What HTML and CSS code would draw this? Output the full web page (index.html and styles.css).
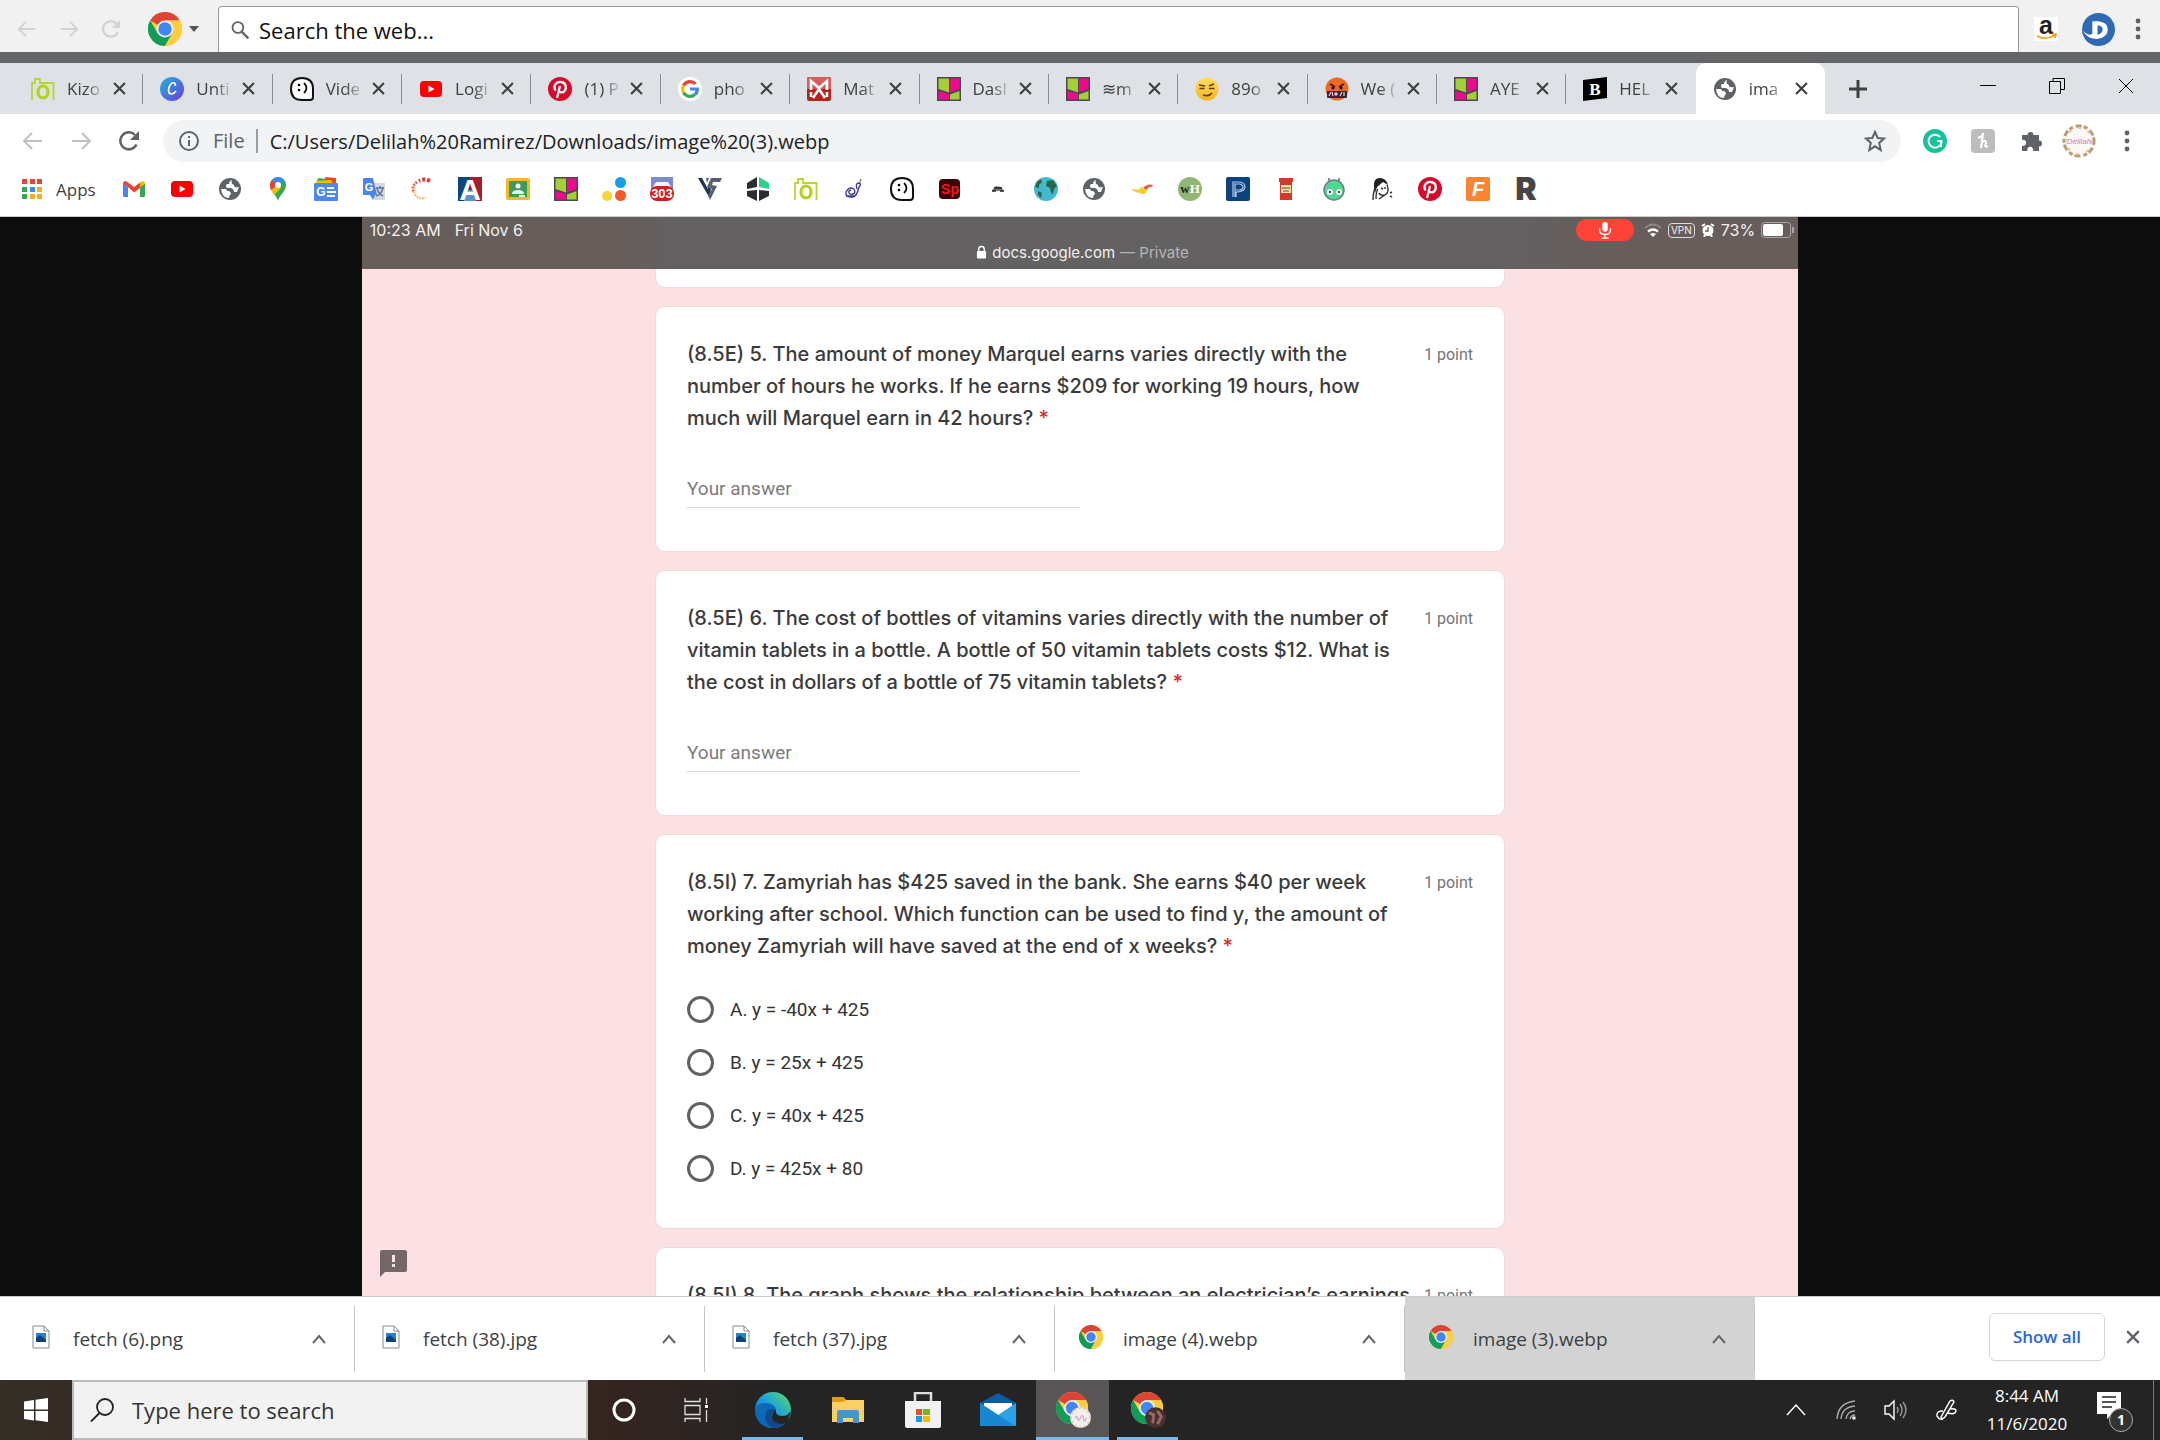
FILE: index.html
```html
<!DOCTYPE html>
<html lang="en">
<head>
	<title>image (3).webp</title>
	<meta charset="utf-8">
	<link rel="stylesheet" href="styles.css">
</head>
<body>
	<!-- shared icons -->
	<svg class="sprite" aria-hidden="true">
		<defs>
			<linearGradient id="g-canva" x1="0" y1="0" x2="1" y2="1"><stop offset="0" stop-color="#21b5d8"/><stop offset="1" stop-color="#6a3be0"/></linearGradient>
			<linearGradient id="g-edge" x1="0" y1="1" x2="1" y2="0"><stop offset="0" stop-color="#0c59a4"/><stop offset=".5" stop-color="#1b9de2"/><stop offset="1" stop-color="#5be05a"/></linearGradient>
			<linearGradient id="g-emoji" x1="0" y1="0" x2="0" y2="1"><stop offset="0" stop-color="#ffdf5e"/><stop offset="1" stop-color="#f5b31f"/></linearGradient>
		</defs>
		<symbol id="back" viewBox="0 0 24 24"><path d="M21 12H4M11 4l-8 8 8 8" fill="none" stroke="currentColor" stroke-width="2"/></symbol>
		<symbol id="forward" viewBox="0 0 24 24"><path d="M3 12h17M13 4l8 8-8 8" fill="none" stroke="currentColor" stroke-width="2"/></symbol>
		<symbol id="reload" viewBox="0 0 24 24"><path d="M19.500 15.500A8.500 8.500 0 1 1 18 6" fill="none" stroke="currentColor" stroke-width="2.500"/><path d="M22 2v9h-9z" fill="currentColor"/></symbol>
		<symbol id="chrome" viewBox="0 0 24 24">
			<circle cx="12" cy="12" r="12" fill="#ffcd40"/>
			<path d="M12 12L1.600 6A12 12 0 0 1 22.400 6H12z" fill="#db4437"/>
			<path d="M1.600 6A12 12 0 0 0 12 24l5.200-9L12 12 6.800 15z" fill="#0f9d58"/>
			<path d="M12 6h10.400A12 12 0 0 1 12 24l5.200-9z" fill="#ffcd40"/>
			<circle cx="12" cy="12" r="6" fill="#f1f1f1"/><circle cx="12" cy="12" r="4.700" fill="#4285f4"/>
		</symbol>
		<symbol id="lens" viewBox="0 0 24 24"><circle cx="9.500" cy="9" r="6.500" fill="none" stroke="currentColor" stroke-width="2.200"/><path d="M14 14l8 8" stroke="currentColor" stroke-width="2.800"/></symbol>
		<symbol id="dots" viewBox="0 0 24 24"><circle cx="12" cy="4" r="2.400" fill="#5f6368"/><circle cx="12" cy="12" r="2.400" fill="#5f6368"/><circle cx="12" cy="20" r="2.400" fill="#5f6368"/></symbol>
		<symbol id="x" viewBox="0 0 12 12"><path d="M1 1l10 10M11 1L1 11" fill="none" stroke="currentColor" stroke-width="2"/></symbol>
		<symbol id="up" viewBox="0 0 14 10"><path d="M1 9l6-7 6 7" fill="none" stroke="currentColor" stroke-width="2"/></symbol>
		<symbol id="camera" viewBox="0 0 24 24"><path d="M1 23V6h3V2h5v4h13.500v17" fill="none" stroke="#b9d532" stroke-width="1.800"/><ellipse cx="12" cy="15" rx="5" ry="6" fill="none" stroke="#b4d21c" stroke-width="3.200"/></symbol>
		<symbol id="canva" viewBox="0 0 24 24"><circle cx="12" cy="12" r="12" fill="url(#g-canva)"/><path d="M15.500 9c0-4-3-4-5-1.500-2.500 3-3 9 .5 9.500 2 .2 4-1.500 5-3" fill="none" stroke="#fff" stroke-width="1.600"/></symbol>
		<symbol id="smile" viewBox="0 0 24 24"><path d="M12 1C5 1 1 5 1 12s4 11 11 11h8q3 0 3-3v-8C23 5 19 1 12 1z" fill="#fff" stroke="#111" stroke-width="2"/><circle cx="9" cy="8" r="1.300"/><circle cx="9" cy="13" r="1.300"/><path d="M14 6q5 5 0 10" fill="none" stroke="#111" stroke-width="1.800"/></symbol>
		<symbol id="youtube" viewBox="0 0 24 24"><rect x="1" y="4" width="22" height="16" rx="4" fill="#f00"/><path d="M9.500 8.500v7l6-3.500z" fill="#fff"/></symbol>
		<symbol id="pinterest" viewBox="0 0 24 24"><circle cx="12" cy="12" r="12" fill="#d8092a"/><path d="M9 21l3-12M7.500 13.500C4.500 8 9 4.500 13 5c5 .5 6 6 3.500 9-1.500 2-4.500 1.800-5.500 0" fill="none" stroke="#fff" stroke-width="2.300"/></symbol>
		<symbol id="google" viewBox="0 0 24 24"><circle cx="12" cy="12" r="12" fill="#fff"/><g fill="none" stroke-width="3.200"><path d="M17.500 7A7.500 7.500 0 0 0 5.500 8.500" stroke="#ea4335"/><path d="M5.500 8.500a7.500 7.500 0 0 0 0 7" stroke="#fbbc05"/><path d="M5.500 15.500a7.500 7.500 0 0 0 11.500 2" stroke="#34a853"/><path d="M17 17.500q2.500-2 2.300-5.500H12" stroke="#4285f4"/></g></symbol>
		<symbol id="mathway" viewBox="0 0 24 24"><rect width="24" height="24" rx="2" fill="#b81f1f"/><path d="M0 2q0-2 2-2h20q2 0 2 2v10H0z" fill="#d3605c"/><path d="M4 13V4l8 7 8-7v9M6 21l6-9 6 9M4 20v-5M20 20v-5" fill="none" stroke="#fff" stroke-width="2.600"/></symbol>
		<symbol id="kami" viewBox="0 0 24 24"><rect width="24" height="24" fill="#4d4650"/><path d="M1.500 1.500H12v14L1.500 12z" fill="#a4d037"/><path d="M13 1.500h9.500V12L13 15.500zM1.500 14l10.500 3v5.500H1.500z" fill="#ed0a8c"/><path d="M13 17.500l9.500-3.500v8.500H13z" fill="#a4d037"/></symbol>
		<symbol id="smirk" viewBox="0 0 24 24"><circle cx="12" cy="12" r="11.500" fill="url(#g-emoji)"/><path d="M4 8l6 1M14 9l5-2M4.500 11.500h5M14 11.500h5.500M8 18q6 2 9-2" fill="none" stroke="#5c3b14" stroke-width="1.700"/></symbol>
		<symbol id="angry" viewBox="0 0 24 24"><circle cx="12" cy="12" r="11.500" fill="#ee6a20"/><path d="M5 7l5 3M19 7l-5 3" stroke="#431c10" stroke-width="2"/><circle cx="8" cy="11" r="1.500"/><circle cx="16" cy="11" r="1.500"/><rect x="2" y="14" width="20" height="7" rx="1" fill="#2b2a35"/><path d="M4 19l2-4M7 15l1 4M11 15v4M9 17h4M15 19l2-4M19 15v4" stroke="#fff"/></symbol>
		<symbol id="globe" viewBox="0 0 24 24"><circle cx="12" cy="12" r="11" fill="#5f6368"/><path d="M14 3q-3 1-3 4H9q-2 2 0 4h4q3 1 3 4h3l2-5q-4 1-5-1 0-2-2-2-1-2 0-4zM3 12h4q2 0 2 2h2q2 1 2 3-2 1-2 4-7 0-8-9z" fill="#fff"/></symbol>
		<symbol id="gmail" viewBox="0 0 24 24"><path d="M1 6v13q0 1 1 1h4V10z" fill="#4285f4"/><path d="M23 6v13q0 1-1 1h-4V10z" fill="#34a853"/><path d="M18 10V5.500L20 4q3 0 3 3z" fill="#fbbc04"/><path d="M6 10L1 6.500Q1 4 4 4l2 1.500 6 4.500 6-4.500V11l-6 4.500z" fill="#ea4335"/></symbol>
		<symbol id="pin" viewBox="0 0 24 24"><path d="M12 24C11 18 4 15 4 8a8 8 0 0 1 16 0c0 7-7 10-8 16z" fill="#34a853"/><path d="M4 8q0-3 2-5l6 5-7 5Q4 11 4 8z" fill="#ea4335"/><path d="M6 3q6-6 12 0l-6 5z" fill="#4285f4"/><path d="M5 13l7-5 3 3-7 7z" fill="#fbbc04"/><circle cx="12" cy="8" r="3" fill="#fff"/></symbol>
		<symbol id="file" viewBox="0 0 24 24"><path d="M4 1h11l5 5v17H4z" fill="#fff" stroke="#8b8b8b"/><path d="M15 1v5h5" fill="none" stroke="#8b8b8b"/><path d="M7 8h10v9H7z" fill="#1e86d6"/><path d="M7 17v-4l4-3 6 5v2z" fill="#123f75"/></symbol>
	</svg>

	<form class="websearch">
		<button type="button" class="nav off" aria-label="Back"><svg><use href="#back"/></svg></button>
		<button type="button" class="nav off" aria-label="Forward"><svg><use href="#forward"/></svg></button>
		<button type="button" class="nav off" aria-label="Reload"><svg><use href="#reload"/></svg></button>
		<button type="button" class="engine" aria-label="Browser"><svg><use href="#chrome"/></svg><span class="caret"></span></button>
		<label class="webbox">
			<svg><use href="#lens"/></svg>
			<input type="text" placeholder="Search the web..." aria-label="Search the web">
		</label>
		<a href="#" class="amazon" aria-label="Amazon"><svg viewBox="0 0 24 24"><rect width="24" height="24" fill="#fff"/><text x="12" y="17" class="t-sans" font-size="25" fill="#222">a</text><path d="M3 19q9 5 18-1M18 17h4l-1 4" fill="none" stroke="#f79a1c" stroke-width="1.600"/></svg></a>
		<a href="#" class="dlogo" aria-label="D"><svg viewBox="0 0 32 32"><circle cx="16" cy="16" r="16" fill="#2f68b4"/><path d="M1 17q5 6 9 3V8h6q9 1 9 8t-9 9q-11 1-15-8z" fill="#fff"/><path d="M15 12q5 0 5 4t-5 5z" fill="#2f68b4"/></svg></a>
		<button type="button" class="nav more" aria-label="Menu"><svg><use href="#dots"/></svg></button>
	</form>

	<div class="tabstrip">
		<ul class="tabs">
			<li><svg><use href="#camera"/></svg><span>Kizo</span><button aria-label="Close"><svg><use href="#x"/></svg></button></li>
			<li><svg><use href="#canva"/></svg><span>Unti</span><button aria-label="Close"><svg><use href="#x"/></svg></button></li>
			<li><svg><use href="#smile"/></svg><span>Vide</span><button aria-label="Close"><svg><use href="#x"/></svg></button></li>
			<li><svg><use href="#youtube"/></svg><span>Logi</span><button aria-label="Close"><svg><use href="#x"/></svg></button></li>
			<li><svg><use href="#pinterest"/></svg><span>(1) P</span><button aria-label="Close"><svg><use href="#x"/></svg></button></li>
			<li><svg><use href="#google"/></svg><span>pho</span><button aria-label="Close"><svg><use href="#x"/></svg></button></li>
			<li><svg><use href="#mathway"/></svg><span>Mat</span><button aria-label="Close"><svg><use href="#x"/></svg></button></li>
			<li><svg><use href="#kami"/></svg><span>Dasl</span><button aria-label="Close"><svg><use href="#x"/></svg></button></li>
			<li><svg><use href="#kami"/></svg><span>≋m</span><button aria-label="Close"><svg><use href="#x"/></svg></button></li>
			<li><svg><use href="#smirk"/></svg><span>89o</span><button aria-label="Close"><svg><use href="#x"/></svg></button></li>
			<li><svg><use href="#angry"/></svg><span>We (</span><button aria-label="Close"><svg><use href="#x"/></svg></button></li>
			<li><svg><use href="#kami"/></svg><span>AYE</span><button aria-label="Close"><svg><use href="#x"/></svg></button></li>
			<li><svg viewBox="0 0 24 24"><path d="M0 3l24-3v21L0 24z" fill="#000"/><text x="12" y="18" class="t-serif" font-size="17" fill="#fff">B</text></svg><span>HEL</span><button aria-label="Close"><svg><use href="#x"/></svg></button></li>
			<li class="active"><svg><use href="#globe"/></svg><span>ima</span><button aria-label="Close"><svg><use href="#x"/></svg></button></li>
		</ul>
		<button class="newtab" aria-label="New tab"><svg viewBox="0 0 18 18"><path d="M9 0v18M0 9h18" stroke="#3c4043" stroke-width="3"/></svg></button>
		<div class="winbtns">
			<button aria-label="Minimize"><svg viewBox="0 0 16 16"><path d="M0 7.500h16" stroke="#000"/></svg></button>
			<button aria-label="Restore"><svg viewBox="0 0 16 16"><path d="M.5 3.500h11v12H.5zM4 3V.5h11.500v11H12" fill="none" stroke="#000"/></svg></button>
			<button aria-label="Close"><svg viewBox="0 0 16 16"><path d="M1 1l14 14M15 1L1 15" stroke="#000"/></svg></button>
		</div>
	</div>

	<div class="toolbar">
		<button class="nav off" aria-label="Back"><svg><use href="#back"/></svg></button>
		<button class="nav off" aria-label="Forward"><svg><use href="#forward"/></svg></button>
		<button class="nav" aria-label="Reload"><svg><use href="#reload"/></svg></button>
		<label class="omnibox">
			<svg viewBox="0 0 24 24"><circle cx="12" cy="12" r="9" fill="none" stroke="#5f6368" stroke-width="2"/><path d="M12 7v2M12 11v6" stroke="#5f6368" stroke-width="2"/></svg>
			<span>File</span>
			<input type="text" value="C:/Users/Delilah%20Ramirez/Downloads/image%20(3).webp" aria-label="Address">
			<svg viewBox="0 0 24 24"><path d="M12 3l2.700 6 6.300.6-4.800 4.300L17.700 21 12 17.300 6.300 21l1.500-7.100L3 9.600 9.300 9z" fill="none" stroke="#5f6368" stroke-width="2"/></svg>
		</label>
		<button class="nav" aria-label="Grammarly"><svg viewBox="0 0 24 24"><circle cx="12" cy="12" r="12" fill="#15c39a"/><path d="M17 8a6.500 6.500 0 1 0 1.500 4H14M18 12v6" fill="none" stroke="#fff" stroke-width="2"/></svg></button>
		<button class="nav" aria-label="Honey"><svg viewBox="0 0 24 24"><rect width="24" height="24" rx="4" fill="#bdbdbd"/><path d="M7 9q6-2 5-5l-2 15q1-8 4-7 2 1 0 5l3 1" fill="none" stroke="#fff" stroke-width="2"/></svg></button>
		<button class="nav" aria-label="Extensions"><svg viewBox="0 0 24 24"><path d="M3 6h5.500a3 3 0 1 1 6 0H20v5.500a3 3 0 1 1 0 6V22h-6a3 3 0 1 0-5.500 0H3v-5.500a3 3 0 1 0 0-5.500z" fill="#5f6368"/></svg></button>
		<button class="nav avatar" aria-label="Profile"><svg viewBox="0 0 34 34"><circle cx="17" cy="17" r="17" fill="#fbf7f5"/><circle cx="17" cy="17" r="15" fill="none" stroke="#b2a070" stroke-width="3" stroke-dasharray="4 3 6 2"/><circle cx="17" cy="17" r="13" fill="none" stroke="#ecc0b8" stroke-width="2" stroke-dasharray="3 7"/><text x="17" y="20" class="t-script" font-size="8" fill="#d77ba6">Delilah</text></svg></button>
		<button class="nav" aria-label="Menu"><svg><use href="#dots"/></svg></button>
	</div>

	<nav class="bookmarks">
		<a href="#" class="apps">
			<svg viewBox="0 0 20 20"><path d="M0 0h5v5H0zM8 0h5v5H8zM15 0h5v5h-5z" fill="#ea4335"/><path d="M0 8h5v5H0z" fill="#34a853"/><path d="M8 8h5v5H8z" fill="#4285f4"/><path d="M15 8h5v5h-5zM8 15h5v5H8zM15 15h5v5h-5z" fill="#f2b01e"/><path d="M0 15h5v5H0z" fill="#34a853"/></svg>
			<span>Apps</span>
		</a>
		<a href="#" aria-label="Gmail"><svg><use href="#gmail"/></svg></a>
		<a href="#" aria-label="YouTube"><svg><use href="#youtube"/></svg></a>
		<a href="#" aria-label="Site"><svg><use href="#globe"/></svg></a>
		<a href="#" aria-label="Maps"><svg><use href="#pin"/></svg></a>
		<a href="#" aria-label="News"><svg viewBox="0 0 24 24"><path d="M4 1l17 2v6H2z" fill="#34a853"/><path d="M11 0l11 1v5H12z" fill="#ea4335"/><path d="M2 4l15-1 2 4H2z" fill="#fbbc04"/><rect y="6" width="24" height="18" rx="1" fill="#4d88ec"/><text x="7" y="19" class="t-sans" font-size="12" fill="#fff">G</text><path d="M13 11h7M13 15h9M13 19h8" stroke="#fff" stroke-width="1.800"/></svg></a>
		<a href="#" aria-label="Translate"><svg viewBox="0 0 24 24"><path d="M10 6h13v17H12z" fill="#d5d8df"/><path d="M14 11h8M18 9v2M21 11q-2 7-7 8M15 12q2 5 6 7" fill="none" stroke="#5b7794" stroke-width="1.500"/><path d="M2 1h9l4 17h-2l-2 5-3-5H1V2z" fill="#4a85e8"/><text x="7" y="14" class="t-sans" font-size="11" fill="#fff">G</text></svg></a>
		<a href="#" aria-label="Circle"><svg viewBox="0 0 24 24"><path d="M20 4Q14 1 9 4" fill="none" stroke="#d93838" stroke-width="4" stroke-dasharray="3 2"/><path d="M7 5Q1 9 4 16" fill="none" stroke="#e8683d" stroke-width="3" stroke-dasharray="2 1"/><path d="M5 17q3 6 11 4" fill="none" stroke="#edbd5a" stroke-width="2" stroke-dasharray="2 1"/></svg></a>
		<a href="#" aria-label="A"><svg viewBox="0 0 24 24"><path d="M0 0h12v24H0z" fill="#0e467c"/><path d="M12 0h12v24H12z" fill="#a5202e"/><path d="M8 13h8l2 11H6z" fill="#5c94c4"/><text x="12" y="23" class="t-sans" font-size="30" fill="#fff">A</text></svg></a>
		<a href="#" aria-label="Classroom"><svg viewBox="0 0 24 24"><rect y="1" width="24" height="22" rx="2" fill="#f2b92b"/><rect x="3" y="4" width="18" height="16" fill="#3f9b5a"/><circle cx="12" cy="9" r="2.500" fill="#fff"/><path d="M6 17q0-4 6-4t6 4zM13 18h6v2h-6z" fill="#e8f4ed"/></svg></a>
		<a href="#" aria-label="Dashboard"><svg><use href="#kami"/></svg></a>
		<a href="#" aria-label="Dots"><svg viewBox="0 0 24 24"><circle cx="18.500" cy="5.500" r="5.500" fill="#119fe8"/><circle cx="5" cy="19" r="5" fill="#f8d33a"/><circle cx="18.500" cy="18.500" r="5.500" fill="#f4592a"/></svg></a>
		<a href="#" aria-label="303"><svg viewBox="0 0 24 24"><path d="M1 0h22v13H1z" fill="#7d8bcf"/><path d="M6 5h12l3 5H3z" fill="#f2f4fb"/><rect y="9" width="24" height="15" rx="7" fill="#cc1e1e"/><text x="12" y="21" class="t-sans" font-size="13" fill="#fff">303</text></svg></a>
		<a href="#" aria-label="VS"><svg viewBox="0 0 24 24"><path d="M0 1h4l6 11V9l3 3-2 8z" fill="#1d3752"/><path d="M8 1h3l-2 5zM13 1h11l-2 4h-7l-1 3 5 1-7 14-2-5 4-6-5-2z" fill="#58606c"/></svg></a>
		<a href="#" aria-label="Cube"><svg viewBox="0 0 24 24"><path d="M1 6l10-6v10L1 12zM1 14l10-1v11L1 19zM23 14l-10-1v11l10-5z" fill="#2b2d30"/><path d="M13 0l10 6v6l-10-2z" fill="#2dd08c"/></svg></a>
		<a href="#" aria-label="Kizoa"><svg><use href="#camera"/></svg></a>
		<a href="#" aria-label="Swan"><svg viewBox="0 0 24 24"><path d="M15 12q-2-6 2-6 3 1 0 4-2 9-6 10-8 1-7-5 3-6 8-3 2 4-1 5t-4-1 2-3M4 19h9" fill="none" stroke="#403f8d" stroke-width="1.400"/><path d="M18 5l1-3" stroke="#a57d5e" stroke-width="1.500"/></svg></a>
		<a href="#" aria-label="Smile"><svg><use href="#smile"/></svg></a>
		<a href="#" aria-label="Spark"><svg viewBox="0 0 24 24"><rect x="1" y="2" width="21" height="20" rx="4" fill="#3d0306"/><text x="12" y="17" class="t-sans" font-size="14" fill="#f5161c">Sp</text></svg></a>
		<a href="#" aria-label="Cap"><svg viewBox="0 0 24 24"><path d="M6 13l4-4 5 1 3 4H6z" fill="#777"/><path d="M8 11h8M6 14h4M14 14h4" stroke="#222" stroke-width="1.500"/></svg></a>
		<a href="#" aria-label="Earth"><svg viewBox="0 0 24 24"><circle cx="12" cy="12" r="12" fill="#43b8cf"/><path d="M3 5l4-3 1 3-3 3v3l-4-1zM4 14l4 2-1 5-3-3zM13 4l6-1 4 6-3 3-1 5-2-1-1-5-4-2z" fill="#29664e"/></svg></a>
		<a href="#" aria-label="Site"><svg><use href="#globe"/></svg></a>
		<a href="#" aria-label="Bird"><svg viewBox="0 0 24 24"><path d="M1 12q6 1 9 0l2-3 1 3 5-2-2 6q-4 2-6 0-6-1-9-4z" fill="#f4cf27"/><path d="M13 11q4-5 10-3l-1 2q-4-1-5 3z" fill="#ef5b3c"/></svg></a>
		<a href="#" aria-label="wikiHow"><svg viewBox="0 0 24 24"><circle cx="12" cy="12" r="12" fill="#8fb673"/><text x="12" y="16" class="t-serif" font-size="13" fill="#222">w<tspan fill="#fff">H</tspan></text></svg></a>
		<a href="#" aria-label="PowerSchool"><svg viewBox="0 0 24 24"><rect width="24" height="24" rx="2" fill="#0d4280"/><path d="M7 20V5h7q5 1 5 5t-7 5h-2v5M9 20V7h5q3 1 3 3t-3 3h-4" fill="none" stroke="#b8cce3" stroke-width="1.200"/></svg></a>
		<a href="#" aria-label="Can"><svg viewBox="0 0 24 24"><path d="M5 1h14v4H5zM6 5h12v18H6z" fill="#d8362f"/><path d="M7 8h10v8H7z" fill="#f3e3a8"/><path d="M8 11h8M9 14h6" stroke="#6d4030"/></svg></a>
		<a href="#" aria-label="Alien"><svg viewBox="0 0 24 24"><path d="M7 6V1M17 6V1" stroke="#667" stroke-width="1.500"/><circle cx="12" cy="13" r="10" fill="#4edb91" stroke="#6e7d88" stroke-width="1.500"/><circle cx="8" cy="15" r="3" fill="#fff"/><circle cx="17" cy="15" r="3" fill="#fff"/><circle cx="8" cy="15" r="1"/><circle cx="17" cy="15" r="1"/></svg></a>
		<a href="#" aria-label="Person"><svg viewBox="0 0 24 24"><path d="M4 10Q3 1 10 1q6 0 8 7l-5-3-6 5-2 6z" fill="#222"/><path d="M17 8q3 7-2 10-5 1-6-2M3 23Q3 12 7 9M6 22q0-8 2-10M9 22l6-4M11 11l2 1M15 10v2M20 16l2-1M20 19l2 1" fill="none" stroke="#333" stroke-width="1.400"/></svg></a>
		<a href="#" aria-label="Pinterest"><svg><use href="#pinterest"/></svg></a>
		<a href="#" aria-label="F"><svg viewBox="0 0 24 24"><rect width="24" height="24" rx="2" fill="#f98432"/><text x="12" y="19" class="t-sans" font-size="20" font-style="italic" fill="#fff">F</text></svg></a>
		<a href="#" aria-label="R"><svg viewBox="0 0 24 24"><text x="12" y="23" class="t-black" font-size="32" fill="#454545">R</text></svg></a>
	</nav>

	<main class="viewer">
		<div class="tablet">
			<header class="status">
				<div class="row">
					<span>10:23 AM</span>
					<span>Fri Nov 6</span>
					<div class="indicators">
						<span class="mic"><svg viewBox="0 0 16 20"><rect x="5" y="1" width="6" height="11" rx="3" fill="#fff"/><path d="M2 8v2q0 5 6 5t6-5V8M8 15v4M4 19h8" fill="none" stroke="#fff" stroke-width="1.500"/></svg></span>
						<svg class="wifi" viewBox="0 0 18 14"><path d="M1 5q8-7 16 0" fill="none" stroke="#8d8888" stroke-width="2"/><path d="M4 8.500q5-4 10 0" fill="none" stroke="#fff" stroke-width="2.500"/><path d="M6 11q3-2 6 0l-3 3z" fill="#fff"/></svg>
						<span class="vpn">VPN</span>
						<svg class="alarm" viewBox="0 0 14 14"><circle cx="7" cy="7.500" r="5.500" fill="#fff"/><path d="M1 3l3-2M13 3l-3-2M3 14l1-2M11 14l-1-2" stroke="#fff" stroke-width="2"/><path d="M7 4v4H4" fill="none" stroke="#675d5b" stroke-width="1.300"/></svg>
						<span>73%</span>
						<svg class="battery" viewBox="0 0 34 16"><rect x=".5" y=".5" width="29" height="15" rx="3" fill="none" stroke="#aaa5a4"/><rect x="2" y="2" width="20" height="12" rx="2" fill="#fff"/><path d="M32 5v6" stroke="#aaa5a4" stroke-width="2"/></svg>
					</div>
				</div>
				<p class="site"><svg viewBox="0 0 12 14"><rect x="1" y="6" width="10" height="8" rx="1" fill="#fff"/><path d="M3 7V4q0-3 3-3t3 3v3" fill="none" stroke="#fff" stroke-width="1.500"/></svg>docs.google.com <span>— Private</span></p>
			</header>

			<div class="form">
				<section class="card stub"></section>
				<section class="card">
					<div class="question">
						<h2>(8.5E) 5. The amount of money Marquel earns varies directly with the<br>number of hours he works. If he earns $209 for working 19 hours, how<br>much will Marquel earn in 42 hours? <em>*</em></h2>
						<span>1 point</span>
					</div>
					<input type="text" placeholder="Your answer" aria-label="Answer 5">
				</section>
				<section class="card">
					<div class="question">
						<h2>(8.5E) 6. The cost of bottles of vitamins varies directly with the number of<br>vitamin tablets in a bottle. A bottle of 50 vitamin tablets costs $12. What is<br>the cost in dollars of a bottle of 75 vitamin tablets? <em>*</em></h2>
						<span>1 point</span>
					</div>
					<input type="text" placeholder="Your answer" aria-label="Answer 6">
				</section>
				<section class="card">
					<div class="question">
						<h2>(8.5I) 7. Zamyriah has $425 saved in the bank. She earns $40 per week<br>working after school. Which function can be used to find y, the amount of<br>money Zamyriah will have saved at the end of x weeks? <em>*</em></h2>
						<span>1 point</span>
					</div>
					<div class="choices">
						<label><input type="radio" name="q7">A. y = -40x + 425</label>
						<label><input type="radio" name="q7">B. y = 25x + 425</label>
						<label><input type="radio" name="q7">C. y = 40x + 425</label>
						<label><input type="radio" name="q7">D. y = 425x + 80</label>
					</div>
				</section>
				<section class="card">
					<div class="question">
						<h2>(8.5I) 8. The graph shows the relationship between an electrician’s earnings</h2>
						<span>1 point</span>
					</div>
				</section>
			</div>
			<button class="report" aria-label="Report a problem"><svg viewBox="0 0 27 27"><path d="M2 0h23q2 0 2 2v18q0 2-2 2H5l-5 5V2q0-2 2-2z" fill="#746768"/><path d="M13.500 5v7M13.500 14v3" stroke="#fbe1e3" stroke-width="3"/></svg></button>
		</div>
	</main>

	<div class="downloads">
		<a href="#" class="item"><svg><use href="#file"/></svg><span>fetch (6).png</span><svg class="up"><use href="#up"/></svg></a>
		<a href="#" class="item"><svg><use href="#file"/></svg><span>fetch (38).jpg</span><svg class="up"><use href="#up"/></svg></a>
		<a href="#" class="item"><svg><use href="#file"/></svg><span>fetch (37).jpg</span><svg class="up"><use href="#up"/></svg></a>
		<a href="#" class="item"><svg><use href="#chrome"/></svg><span>image (4).webp</span><svg class="up"><use href="#up"/></svg></a>
		<a href="#" class="item hover"><svg><use href="#chrome"/></svg><span>image (3).webp</span><svg class="up"><use href="#up"/></svg></a>
		<button class="showall">Show all</button>
		<button class="closebar" aria-label="Close"><svg><use href="#x"/></svg></button>
	</div>

	<footer class="taskbar">
		<button class="start" aria-label="Start"><svg viewBox="0 0 24 24"><path d="M0 3.500L10 2v9.500H0zM11.500 1.800L24 0v11.500H11.500zM0 13h10v9.500L0 21zM11.500 13H24v11l-12.500-1.800z" fill="#fff"/></svg></button>
		<label class="tasksearch">
			<svg viewBox="0 0 24 24"><circle cx="15" cy="9" r="8" fill="none" stroke="#222" stroke-width="1.800"/><path d="M9.500 15L1 23.500" stroke="#222" stroke-width="1.800"/></svg>
			<input type="text" placeholder="Type here to search" aria-label="Type here to search">
		</label>
		<button class="sys" aria-label="Cortana"><svg viewBox="0 0 24 24"><circle cx="12" cy="12" r="10" fill="none" stroke="#fff" stroke-width="3"/></svg></button>
		<button class="sys" aria-label="Task view"><svg viewBox="0 0 24 24"><path d="M1 0v3.500h15V0M1 7.500h15v9H1zM1 24v-3.500h15V24M22.500 0v6M22.500 12v12" fill="none" stroke="#ddd" stroke-width="1.300"/><path d="M21 7h3v3h-3z" fill="#fff"/></svg></button>
		<div class="apps-open">
			<button class="open" aria-label="Edge"><svg viewBox="0 0 36 36"><circle cx="18" cy="18" r="18" fill="url(#g-edge)"/><path d="M0 20q1-9 10-9 9 0 11 6-5 2-4 8 2 7 14 5-6 7-15 6Q2 34 0 20z" fill="#0d68b8"/><path d="M11 20q-3 12 8 16 8-1 13-7-11 3-15-3-1-5 3-8-5-3-9 2z" fill="#104a8a"/><path d="M21 17q-1 4 2 6 4 2 9 0l4-4-4 12q-12 3-15-5 0-6 4-9z" fill="#252425"/></svg></button>
			<button aria-label="Explorer"><svg viewBox="0 0 36 36"><path d="M2 5h11l3 3h18v22H2z" fill="#f8d066"/><path d="M2 5h11l3 3-3 2H2z" fill="#dc9b1b"/><path d="M7 31V20q0-2 2-2h18q2 0 2 2v11h-6v-5H13v5z" fill="#4395d6"/></svg></button>
			<button aria-label="Store"><svg viewBox="0 0 36 36"><path d="M10 10V1h16v9" fill="none" stroke="#ddd" stroke-width="2.500"/><path d="M0 9h36v25q0 2-2 2H2q-2 0-2-2z" fill="#f1f1f1"/><path d="M11 17h6v6h-6z" fill="#e05021"/><path d="M18 17h7v6h-7z" fill="#7db514"/><path d="M11 24h6v6h-6z" fill="#1d98e3"/><path d="M18 24h7v6h-7z" fill="#f2ba13"/></svg></button>
			<button aria-label="Mail"><svg viewBox="0 0 36 36"><path d="M0 11L18 1l18 10v8H0z" fill="#0d5ba8"/><path d="M4 11h28v12H4z" fill="#fff"/><path d="M0 11l18 12 18-12v22q0 1-1 1H1q-1 0-1-1z" fill="#2aa3e6"/><path d="M0 11l35 23H1q-1 0-1-1z" fill="#1687d0"/></svg></button>
			<button class="open current" aria-label="Chrome"><svg viewBox="0 0 36 38"><use href="#chrome" width="34" height="34"/><circle cx="26" cy="27" r="11" fill="#f5eeee"/><circle cx="26" cy="27" r="10" fill="none" stroke="#d9c7b7" stroke-width="2" stroke-dasharray="2 3"/><path d="M20 28q2-4 3 0t3-1 3 1 3-1" fill="none" stroke="#d9a0c0" stroke-width="1.200"/></svg></button>
			<button class="open" aria-label="Chrome"><svg viewBox="0 0 36 38"><use href="#chrome" width="34" height="34"/><circle cx="26" cy="27" r="11" fill="#4a302e"/><path d="M19 22l5 2-1 9M28 20l4 6-4 8" fill="none" stroke="#9a6a62" stroke-width="3"/></svg></button>
		</div>
		<div class="tray">
			<button aria-label="Hidden icons"><svg viewBox="0 0 24 24"><path d="M3 17l9-10 9 10" fill="none" stroke="#fff" stroke-width="1.500"/></svg></button>
			<button aria-label="Network"><svg viewBox="0 0 24 24"><g fill="none" stroke="#aaa" stroke-width="1.400"><path d="M3 21Q4 5 21 3"/><path d="M7 21Q8 9 21 8"/><path d="M12 21q1-8 9-8"/><path d="M16 21q1-4 5-4"/></g><circle cx="20" cy="20" r="1.800" fill="#fff"/></svg></button>
			<button aria-label="Volume"><svg viewBox="0 0 24 24"><path d="M1 8h4l5-5v18l-5-5H1z" fill="none" stroke="#fff" stroke-width="1.400"/><path d="M13 9q2 3 0 6M16 6q4 6 0 12M19 4q6 8 0 16" fill="none" stroke="#999" stroke-width="1.400"/></svg></button>
			<button aria-label="Ink"><svg viewBox="0 0 24 24"><path d="M7 19L16 3q3-2 4 1l-9 15q-3 3-4 0zM9 13q-7 0-6 5 2 4 6 3M16 11q6-1 6 2-1 4-8 2" fill="none" stroke="#fff" stroke-width="1.500"/></svg></button>
			<time class="clock"><span>8:44 AM</span><span>11/6/2020</span></time>
			<button class="notes" aria-label="Notifications"><svg viewBox="0 0 36 36"><path d="M0 0h24v22h-9l-5 5v-5H0z" fill="#fff"/><path d="M5 5h14M5 10h14M5 15h10" stroke="#222" stroke-width="1.500"/></svg><b>1</b></button>
		</div>
	</footer>
</body>
</html>
```

FILE: styles.css
```css
*{
	box-sizing: border-box;
	padding: 0;
	margin: 0;
}
body{
	display: flex;
	flex-direction: column;
	height: 100vh;
	overflow: hidden;
	font-family: "Open Sans", "Noto Sans", sans-serif;
	color: #3c4043;
}
button, input{
	font: inherit;
	color: inherit;
	border: 0;
	background: none;
	outline: 0;
}
a{
	color: inherit;
	text-decoration: none;
}
svg{
	display: block;
	flex: none;
	width: 24px;
	height: 24px;
}
.sprite{
	position: absolute;
	width: 0;
	height: 0;
}
.t-sans, .t-serif, .t-black, .t-script{
	font-family: "Liberation Sans", sans-serif;
	font-weight: bold;
	text-anchor: middle;
}
.t-serif{
	font-family: "Liberation Serif", serif;
}
.t-black{
	font-family: Inter, sans-serif;
	font-weight: 900;
}
.t-script{
	font-style: italic;
	font-weight: normal;
}

/* web search strip */
.websearch{
	display: flex;
	align-items: center;
	height: 63px;
	padding: 6px 4px 0 6px;
	background: #f1f1f1;
	border-bottom: 11px solid #646567;
}
.nav{
	display: flex;
	flex: none;
	align-items: center;
	justify-content: center;
	width: 48px;
	color: #5f6368;
}
.off{
	color: #c0c1c3;
}
.websearch .nav{
	width: 42px;
}
.websearch .nav.off svg{
	width: 22px;
	height: 22px;
	color: #d2d2d2;
}
.engine{
	display: flex;
	align-items: center;
	gap: 7px;
	margin-left: 16px;
}
.engine svg{
	width: 34px;
	height: 34px;
}
.caret{
	border: 5px solid transparent;
	border-top: 6px solid #555;
	border-bottom: 0;
}
.webbox{
	display: flex;
	flex: 1;
	align-items: center;
	gap: 9px;
	align-self: stretch;
	margin-left: 19px;
	padding-left: 11px;
	background: #fff;
	border: 1px solid #999;
	border-bottom: 0;
	border-radius: 4px 4px 0 0;
}
.webbox svg{
	width: 20px;
	height: 20px;
	color: #5f6368;
}
.webbox input{
	flex: 1;
	font-size: 22px;
}
.webbox input::placeholder{
	color: #111;
	opacity: 1;
}
.amazon{
	margin: 0 24px 0 15px;
}
.dlogo svg{
	width: 33px;
	height: 33px;
}
.websearch .more{
	width: 36px;
	margin-left: 5px;
}

/* tabs */
.tabstrip{
	display: flex;
	height: 51px;
	padding-left: 14px;
	background: #dee1e6;
}
.tabs{
	display: flex;
	flex: 1;
	list-style: none;
}
.tabs li{
	position: relative;
	display: flex;
	flex: 1;
	align-items: center;
	min-width: 0;
	padding-left: 17px;
}
.tabs li::after{
	content: "";
	position: absolute;
	right: 0;
	width: 1px;
	height: 30px;
	background: #8a8d91;
}
.tabs li:nth-last-child(-n+2)::after{
	display: none;
}
.tabs span{
	width: 38px;
	margin: 0 8px 0 12px;
	font-size: 17px;
	white-space: nowrap;
	-webkit-mask-image: linear-gradient(90deg, #000 50%, transparent);
	mask-image: linear-gradient(90deg, #000 50%, transparent);
}
.tabs button svg{
	width: 13px;
	height: 13px;
}
.tabs .active{
	background: #fff;
	border-radius: 10px 10px 0 0;
}
.newtab{
	width: 66px;
}
.newtab svg{
	width: 18px;
	height: 18px;
	margin: auto;
}
.winbtns{
	display: flex;
	width: 269px;
	padding: 0 0 6px 63px;
}
.winbtns button{
	flex: 1;
}
.winbtns svg{
	width: 16px;
	height: 16px;
	margin: auto;
}

/* address bar */
.toolbar{
	display: flex;
	align-items: center;
	height: 54px;
	padding: 0 9px;
}
.omnibox{
	display: flex;
	flex: 1;
	align-items: center;
	height: 42px;
	margin: 0 10px;
	padding: 0 14px;
	background: #f1f3f4;
	border-radius: 21px;
	font-size: 20px;
}
.omnibox span{
	margin-left: 12px;
	padding-right: 11px;
	line-height: 24px;
	color: #5f6368;
	border-right: 2px solid #9a9da1;
}
.omnibox input{
	flex: 1;
	margin-left: 12px;
	color: #202124;
}
.avatar svg{
	width: 34px;
	height: 34px;
}

/* bookmarks */
.bookmarks{
	display: flex;
	align-items: center;
	gap: 24px;
	height: 49px;
	padding: 0 22px 6px;
	border-bottom: 1px solid #ccc;
}
.apps{
	display: flex;
	align-items: center;
	gap: 14px;
	width: 76px;
	font-size: 17px;
}
.apps svg{
	width: 20px;
	height: 20px;
}

/* picture */
.viewer{
	flex: 1;
	min-height: 0;
	background: #0d0d0d;
}
.tablet{
	position: relative;
	display: flex;
	flex-direction: column;
	width: 66.5%;
	height: 100%;
	margin: 0 auto;
	overflow: hidden;
	background: #fbe1e3;
	font-family: Inter, Roboto, sans-serif;
}
.status{
	flex: none;
	height: 52px;
	padding: 1px 3px 0 8px;
	background: linear-gradient(90deg, #675d5b 18%, #636162 22%, #636162 80%, #675d5b 86%);
	color: #f3f1f1;
	font-size: 16px;
}
.row{
	display: flex;
	align-items: center;
	gap: 14px;
	height: 24px;
}
.indicators{
	display: flex;
	align-items: center;
	gap: 6px;
	margin-left: auto;
}
.mic{
	width: 58px;
	height: 22px;
	margin-right: 4px;
	background: #ff4338;
	border-radius: 11px;
}
.mic svg{
	width: 16px;
	height: 18px;
	margin: 2px auto;
}
.wifi{
	width: 18px;
	height: 14px;
}
.vpn{
	padding: 0 2px;
	border: 1px solid #ddd;
	border-radius: 4px;
	font-size: 10px;
	line-height: 13px;
}
.alarm{
	width: 14px;
	height: 14px;
}
.battery{
	width: 34px;
	height: 16px;
}
.site{
	display: flex;
	gap: 5px;
	align-items: center;
	justify-content: center;
	height: 20px;
	font-size: 15px;
}
.site svg{
	width: 11px;
	height: 14px;
}
.site span{
	color: #b9b6b6;
}

.form{
	display: flex;
	flex-direction: column;
	gap: 18px;
	width: 100%;
	max-width: 850px;
	margin: 0 auto;
}
.card{
	padding: 31px 31px 43px;
	background: #fff;
	border: 1px solid #ecdadd;
	border-radius: 10px;
}
.stub{
	height: 19px;
	padding: 0;
	border-top: 0;
	border-radius: 0 0 10px 10px;
}
.question{
	display: flex;
	justify-content: space-between;
}
.question h2{
	font-size: 20px;
	font-weight: 500;
	line-height: 32px;
	color: #3a3a3a;
	white-space: nowrap;
}
.question em{
	font-style: normal;
	color: #d93025;
}
.question span{
	font-family: Roboto, sans-serif;
	font-size: 16px;
	line-height: 34px;
	color: #757575;
}
.card input[type=text]{
	display: block;
	width: 50%;
	height: 32px;
	margin-top: 42px;
	padding-bottom: 6px;
	border-bottom: 1px solid #d6d6d6;
	font-family: Roboto, sans-serif;
	font-size: 19px;
}
.card input::placeholder{
	color: #7c7c7c;
	opacity: 1;
}
.choices{
	margin: 21px 0 -10px;
	font-family: Roboto, sans-serif;
	font-size: 19px;
	color: #333;
}
.choices label{
	display: flex;
	align-items: center;
	gap: 16px;
	height: 53px;
}
.choices input{
	appearance: none;
	width: 27px;
	height: 27px;
	border: 3px solid #616161;
	border-radius: 50%;
}
.report{
	position: absolute;
	left: 18px;
	bottom: 19px;
}
.report svg{
	width: 27px;
	height: 27px;
}

/* downloads */
.downloads{
	display: flex;
	align-items: center;
	height: 84px;
	padding-left: 5px;
	border-top: 1px solid #ccc;
	font-size: 19px;
}
.item{
	display: flex;
	flex: 0 1 350px;
	align-items: center;
	align-self: stretch;
	padding: 0 29px 0 24px;
	background: linear-gradient(#c4c4c4, #c4c4c4) right center / 1px 66px no-repeat;
}
.item svg{
	margin: 0 20px 4px 0;
}
.item .up{
	width: 14px;
	height: 10px;
	margin: 0 0 0 auto;
	color: #666;
}
.item.hover{
	background-color: #d3d3d3;
}
.showall{
	width: 116px;
	height: 48px;
	margin: 0 21px 4px auto;
	border: 1px solid #d4d6da;
	border-radius: 6px;
	color: #2a66d9;
	font-size: 17px;
	font-weight: 600;
}
.closebar{
	margin: 0 20px 4px 0;
	color: #5f6368;
}
.closebar svg{
	width: 14px;
	height: 14px;
}

/* taskbar */
.taskbar{
	display: flex;
	height: 60px;
	background: linear-gradient(90deg, #352e26, #35241f 28%, #252425 36%);
	color: #fff;
}
.taskbar button svg{
	margin: auto;
}
.start, .sys{
	width: 72px;
}
.tasksearch{
	display: flex;
	align-items: center;
	gap: 18px;
	width: 516px;
	padding-left: 16px;
	background: #f2f2f2;
	border: 2px solid #bbb;
}
.tasksearch input{
	flex: 1;
	font-size: 22px;
	color: #222;
}
.tasksearch input::placeholder{
	color: #333;
	opacity: 1;
}
.apps-open{
	display: flex;
	gap: 2px;
	margin-left: 4px;
}
.apps-open button{
	width: 73px;
}
.apps-open svg{
	width: 36px;
	height: 36px;
}
.open{
	background: linear-gradient(#76b9ed, #76b9ed) center bottom / 61px 3px no-repeat;
}
.current{
	background-color: #575556;
	background-size: 100% 3px;
}
.tray{
	display: flex;
	align-items: center;
	margin-left: auto;
	margin-right: 6px;
	padding-right: 20px;
	border-right: 1px solid #777;
}
.tray button{
	width: 50px;
}
.clock{
	display: flex;
	flex-direction: column;
	width: 112px;
	font-size: 17px;
	line-height: 28px;
	text-align: center;
}
.tray .notes{
	position: relative;
	width: 36px;
	margin-left: 14px;
}
.notes svg{
	width: 36px;
	height: 36px;
}
.notes b{
	position: absolute;
	right: 0;
	bottom: -4px;
	width: 24px;
	height: 24px;
	background: #333;
	border: 1px solid #aaa;
	border-radius: 50%;
	font-size: 14px;
	line-height: 22px;
}
```
